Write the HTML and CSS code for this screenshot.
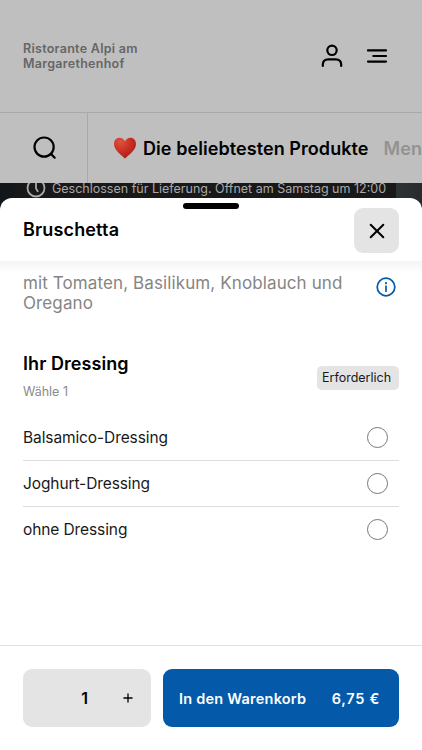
FILE: index.html
```html
<!DOCTYPE html>
<html lang="de">

<head>
    <meta charset="utf-8">
    <meta name="viewport" content="width=device-width, initial-scale=1.0">
    <title>Ristorante Alpi am Margarethenhof</title>
    <link rel="stylesheet" href="styles.css">
</head>

<body>
    <div class="page">
        <header>
            <p class="restaurant">Ristorante Alpi am<br>Margarethenhof</p>
            <div class="header-icons">
                <svg viewBox="0 0 24 26" width="24" height="26">
                    <circle cx="12" cy="7.3" r="4.7" />
                    <path d="M2.800 23v-1.200c0-3.300 2.200-5.400 5.500-5.400h7.400c3.300 0 5.500 2.100 5.500 5.400V23" />
                </svg>
                <svg viewBox="0 0 22 16" width="22" height="16">
                    <path d="M2 2.400h18M7.300 8h12.700M2 13.600h18" />
                </svg>
            </div>
        </header>

        <nav class="menu">
            <button class="search" aria-label="Suche">
                <svg viewBox="0 0 24 24" width="24" height="24">
                    <circle cx="11.100" cy="11.100" r="9.600" />
                    <path d="M17.900 17.900l3.800 3.800" />
                </svg>
            </button>
            <div class="categories">
                <svg class="heart" viewBox="0 0 24 22" width="24" height="22">
                    <defs>
                        <radialGradient id="red" cx="0.3" cy="0.2" r="0.9">
                            <stop offset="0" stop-color="#e0503e" />
                            <stop offset="0.5" stop-color="#cb2f23" />
                            <stop offset="1" stop-color="#a01c14" />
                        </radialGradient>
                    </defs>
                    <path fill="url(#red)" d="M12 21.600C9.500 18.400 1 13.800 1 6.900 1 3.200 3.400.7 6.500.7c2.600 0 4.500 1.400 5.500 3.800C13 2.100 14.900.7 17.500.7 20.600.7 23 3.200 23 6.900 23 13.800 14.500 18.400 12 21.600z" />
                </svg>
                <span class="category active">Die beliebtesten Produkte</span>
                <span class="category">Men</span>
            </div>
        </nav>

        <section class="banner">
            <div class="status">
                <svg viewBox="0 0 20 20" width="20" height="20">
                    <circle cx="10" cy="10" r="8.500" />
                    <path d="M10 5.400v5l1.700 2.800" />
                </svg>
                <span>Geschlossen für Lieferung. Öffnet am Samstag um 12:00</span>
            </div>
        </section>
    </div>

    <main class="sheet">
        <div class="handle"></div>
        <div class="sheet-header">
            <h1>Bruschetta</h1>
            <button class="close" aria-label="Schließen">
                <svg viewBox="0 0 16 16" width="16" height="16">
                    <path d="M1.700 1.700l12.600 12.600M14.300 1.700L1.700 14.300" />
                </svg>
            </button>
        </div>

        <div class="sheet-content">
            <div class="description">
                <p>mit Tomaten, Basilikum, Knoblauch und<br>Oregano</p>
                <svg viewBox="0 0 20 20" width="20" height="20">
                    <circle cx="10" cy="10" r="8.800" />
                    <path d="M10 9v5.200" />
                    <circle class="dot" cx="10" cy="6.200" r="1.100" />
                </svg>
            </div>

            <div class="group-header">
                <div>
                    <h2>Ihr Dressing</h2>
                    <p class="hint">Wähle 1</p>
                </div>
                <span class="required">Erforderlich</span>
            </div>

            <div class="options">
                <label class="option"><span>Balsamico-Dressing</span><input type="radio" name="dressing"></label>
                <label class="option"><span>Joghurt-Dressing</span><input type="radio" name="dressing"></label>
                <label class="option"><span>ohne Dressing</span><input type="radio" name="dressing"></label>
            </div>
        </div>

        <footer>
            <div class="amount">
                <span class="number">1</span>
                <button class="plus" aria-label="Mehr">
                    <svg viewBox="0 0 10 10" width="10" height="10">
                        <path d="M5 .9v8.200M.9 5h8.200" />
                    </svg>
                </button>
            </div>
            <button class="cart">
                <span>In den Warenkorb</span>
                <span class="price">6,75 €</span>
            </button>
        </footer>
    </main>
</body>

</html>
```

FILE: styles.css
```css
* {
    box-sizing: border-box;
}

body {
    margin: 0;
    height: 750px;
    position: relative;
    overflow: hidden;
    font-family: Inter, "Liberation Sans", sans-serif;
    color: #000;
    background-color: #bfbfbf;
}

p,
h1,
h2 {
    margin: 0;
}

button {
    border: none;
    padding: 0;
    font-family: inherit;
    color: inherit;
    cursor: pointer;
}

svg {
    display: block;
    flex: none;
    fill: none;
    stroke: #000;
    stroke-linecap: round;
    stroke-linejoin: round;
}

header {
    height: 112px;
    display: flex;
    justify-content: space-between;
    align-items: center;
    padding: 0 34px 0 23px;
}

.restaurant {
    font-size: 12.5px;
    line-height: 15px;
    font-weight: 600;
    letter-spacing: 0.28px;
    color: #666;
}

.header-icons {
    display: flex;
    align-items: center;
    gap: 22px;
}

.header-icons svg {
    stroke-width: 2.2;
}

.menu {
    height: 71px;
    display: flex;
    border-top: 1px solid #a9a9a9;
    overflow: hidden;
}

.search {
    width: 88px;
    flex: none;
    display: flex;
    align-items: center;
    justify-content: center;
    padding-left: 2px;
    border-right: 1px solid #a9a9a9;
    background: none;
}

.search svg {
    stroke-width: 2.2;
}

.categories {
    display: flex;
    align-items: center;
    padding-left: 25px;
    white-space: nowrap;
}

.heart {
    stroke: none;
    margin-right: 6px;
}

.category {
    font-size: 18px;
    font-weight: 600;
    letter-spacing: 0.07px;
    color: #929292;
}

.category.active {
    color: #000;
    margin-right: 15px;
}

.banner {
    height: 40px;
    overflow: hidden;
    background: linear-gradient(to right, #11161a 0, #191919 30px, #191919 396px, #303336 396px, #282b2e 422px);
}

.status {
    display: flex;
    align-items: center;
    margin-top: -5px;
    padding-left: 26px;
    gap: 6px;
    font-size: 12.5px;
    color: #a9a9a9;
    white-space: nowrap;
}

.status svg {
    stroke: #a9a9a9;
    stroke-width: 1.8;
}

.sheet {
    position: absolute;
    left: 0;
    right: 0;
    bottom: 0;
    height: 552px;
    display: flex;
    flex-direction: column;
    background-color: #fff;
    border-radius: 12px 12px 0 0;
}

.handle {
    width: 56px;
    height: 6px;
    margin: 5px auto 0;
    border-radius: 3px;
    background-color: #000;
}

.sheet-header {
    height: 52px;
    display: flex;
    justify-content: space-between;
    align-items: flex-start;
    padding: 0 23px;
}

h1 {
    margin-top: 10px;
    font-size: 18px;
    line-height: 22px;
    font-weight: 600;
    letter-spacing: 0.15px;
}

.close {
    width: 45px;
    height: 45px;
    margin-top: -1px;
    display: flex;
    align-items: center;
    justify-content: center;
    border-radius: 9px;
    background-color: #e4e4e4;
}

.close svg {
    stroke-width: 2;
}

.sheet-content {
    flex: 1;
    padding: 12px 23px 0;
    background: linear-gradient(#f5f5f5, #fff 12px);
}

.description {
    display: flex;
    justify-content: space-between;
    align-items: flex-start;
    padding-right: 3px;
    font-size: 17px;
    line-height: 20px;
    letter-spacing: 0.11px;
    color: #858585;
    white-space: nowrap;
}

.description svg {
    margin-top: 4px;
    stroke: #045aa9;
    stroke-width: 1.7;
}

.description .dot {
    fill: #045aa9;
    stroke: none;
}

.group-header {
    display: flex;
    justify-content: space-between;
    margin-top: 40px;
}

h2 {
    font-size: 18px;
    line-height: 22px;
    font-weight: 600;
    letter-spacing: 0.07px;
}

.hint {
    margin-top: 9px;
    font-size: 12.5px;
    line-height: 15px;
    color: #8b8b8b;
}

.required {
    width: 82px;
    height: 24px;
    margin-top: 13px;
    padding-left: 5px;
    border-radius: 5px;
    background-color: #e4e4e4;
    font-size: 12.5px;
    line-height: 24px;
    color: #191919;
}

.options {
    margin-top: 16px;
}

.option {
    height: 46px;
    display: flex;
    align-items: center;
    justify-content: space-between;
    padding-right: 11px;
    border-bottom: 1px solid #dedede;
    font-size: 15.5px;
    letter-spacing: -0.1px;
    color: #191919;
}

.option:last-child {
    border-color: transparent;
}

.option input {
    appearance: none;
    width: 21px;
    height: 21px;
    margin: 0;
    border: 1px solid #777;
    border-radius: 50%;
}

footer {
    height: 105px;
    display: flex;
    gap: 12px;
    padding: 23px;
    border-top: 1px solid #e2e2e2;
}

.amount {
    width: 128px;
    display: flex;
    align-items: center;
    justify-content: flex-end;
    padding-right: 18px;
    border-radius: 9px;
    background-color: #e4e4e4;
}

.number {
    margin-right: 35px;
    font-size: 16px;
    font-weight: 600;
}

.plus {
    background: none;
}

.plus svg {
    stroke-width: 1.3;
}

.cart {
    flex: 1;
    display: flex;
    align-items: center;
    justify-content: space-between;
    padding: 0 19px 0 16px;
    border-radius: 9px;
    background-color: #045aa9;
    color: #fff;
    font-size: 14.5px;
    font-weight: 600;
    letter-spacing: 0.23px;
}

.price {
    letter-spacing: 0.7px;
}
```
